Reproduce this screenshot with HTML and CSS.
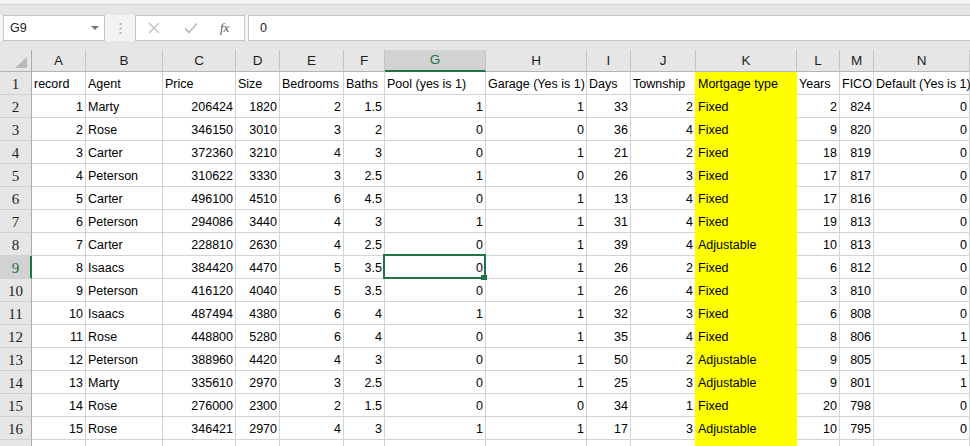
FILE: index.html
```html
<!DOCTYPE html>
<html>
<head>
<meta charset="utf-8">
<link rel="stylesheet" href="styles.css">
</head>
<body>
<div class="top"></div>
<div class="fbar">
  <div class="namebox"><span>G9</span><svg class="dd" width="8" height="4" viewBox="0 0 8 4"><path d="M0 0H8L4 4Z" fill="#777"/></svg></div>
  <div class="dots"><svg width="3" height="11" viewBox="0 0 3 11"><rect x="0.5" y="0" width="2" height="2" fill="#b5b5b5"/><rect x="0.5" y="4.5" width="2" height="2" fill="#b5b5b5"/><rect x="0.5" y="9" width="2" height="2" fill="#b5b5b5"/></svg></div>
  <div class="fxbox">
    <svg class="ico" width="12" height="12" viewBox="0 0 12 12"><path d="M1 1L11 11M11 1L1 11" stroke="#bdbdbd" stroke-width="1.3" fill="none"/></svg>
    <svg class="ico" width="14" height="12" viewBox="0 0 14 12"><path d="M1 6.5L5 10.5L13 1.5" stroke="#bdbdbd" stroke-width="1.8" fill="none"/></svg>
    <span class="fx">fx</span>
  </div>
  <div class="finput">0</div>
</div>
<div class="sheet">
  <div class="ch corner"><svg width="31" height="21" viewBox="0 0 31 21"><path d="M27 7V18H15Z" fill="#b9b9b9"/></svg></div>
  <div class="ch">A</div><div class="ch">B</div><div class="ch">C</div><div class="ch">D</div><div class="ch">E</div><div class="ch">F</div><div class="ch sel">G</div><div class="ch">H</div><div class="ch">I</div><div class="ch">J</div><div class="ch">K</div><div class="ch">L</div><div class="ch">M</div><div class="ch">N</div>

  <div class="rh">1</div><div class="t">record</div><div class="t">Agent</div><div class="t">Price</div><div class="t">Size</div><div class="t">Bedrooms</div><div class="t">Baths</div><div class="t">Pool (yes is 1)</div><div class="t">Garage (Yes is 1)</div><div class="t">Days</div><div class="t">Township</div><div class="t y">Mortgage type</div><div class="t">Years</div><div class="t">FICO</div><div class="t">Default (Yes is 1)</div>

  <div class="rh">2</div><div>1</div><div class="t">Marty</div><div>206424</div><div>1820</div><div>2</div><div>1.5</div><div>1</div><div>1</div><div>33</div><div>2</div><div class="t y">Fixed</div><div>2</div><div>824</div><div>0</div>
  <div class="rh">3</div><div>2</div><div class="t">Rose</div><div>346150</div><div>3010</div><div>3</div><div>2</div><div>0</div><div>0</div><div>36</div><div>4</div><div class="t y">Fixed</div><div>9</div><div>820</div><div>0</div>
  <div class="rh">4</div><div>3</div><div class="t">Carter</div><div>372360</div><div>3210</div><div>4</div><div>3</div><div>0</div><div>1</div><div>21</div><div>2</div><div class="t y">Fixed</div><div>18</div><div>819</div><div>0</div>
  <div class="rh">5</div><div>4</div><div class="t">Peterson</div><div>310622</div><div>3330</div><div>3</div><div>2.5</div><div>1</div><div>0</div><div>26</div><div>3</div><div class="t y">Fixed</div><div>17</div><div>817</div><div>0</div>
  <div class="rh">6</div><div>5</div><div class="t">Carter</div><div>496100</div><div>4510</div><div>6</div><div>4.5</div><div>0</div><div>1</div><div>13</div><div>4</div><div class="t y">Fixed</div><div>17</div><div>816</div><div>0</div>
  <div class="rh">7</div><div>6</div><div class="t">Peterson</div><div>294086</div><div>3440</div><div>4</div><div>3</div><div>1</div><div>1</div><div>31</div><div>4</div><div class="t y">Fixed</div><div>19</div><div>813</div><div>0</div>
  <div class="rh">8</div><div>7</div><div class="t">Carter</div><div>228810</div><div>2630</div><div>4</div><div>2.5</div><div>0</div><div>1</div><div>39</div><div>4</div><div class="t y">Adjustable</div><div>10</div><div>813</div><div>0</div>
  <div class="rh sel">9</div><div>8</div><div class="t">Isaacs</div><div>384420</div><div>4470</div><div>5</div><div>3.5</div><div class="active">0</div><div>1</div><div>26</div><div>2</div><div class="t y">Fixed</div><div>6</div><div>812</div><div>0</div>
  <div class="rh">10</div><div>9</div><div class="t">Peterson</div><div>416120</div><div>4040</div><div>5</div><div>3.5</div><div>0</div><div>1</div><div>26</div><div>4</div><div class="t y">Fixed</div><div>3</div><div>810</div><div>0</div>
  <div class="rh">11</div><div>10</div><div class="t">Isaacs</div><div>487494</div><div>4380</div><div>6</div><div>4</div><div>1</div><div>1</div><div>32</div><div>3</div><div class="t y">Fixed</div><div>6</div><div>808</div><div>0</div>
  <div class="rh">12</div><div>11</div><div class="t">Rose</div><div>448800</div><div>5280</div><div>6</div><div>4</div><div>0</div><div>1</div><div>35</div><div>4</div><div class="t y">Fixed</div><div>8</div><div>806</div><div>1</div>
  <div class="rh">13</div><div>12</div><div class="t">Peterson</div><div>388960</div><div>4420</div><div>4</div><div>3</div><div>0</div><div>1</div><div>50</div><div>2</div><div class="t y">Adjustable</div><div>9</div><div>805</div><div>1</div>
  <div class="rh">14</div><div>13</div><div class="t">Marty</div><div>335610</div><div>2970</div><div>3</div><div>2.5</div><div>0</div><div>1</div><div>25</div><div>3</div><div class="t y">Adjustable</div><div>9</div><div>801</div><div>1</div>
  <div class="rh">15</div><div>14</div><div class="t">Rose</div><div>276000</div><div>2300</div><div>2</div><div>1.5</div><div>0</div><div>0</div><div>34</div><div>1</div><div class="t y">Fixed</div><div>20</div><div>798</div><div>0</div>
  <div class="rh">16</div><div>15</div><div class="t">Rose</div><div>346421</div><div>2970</div><div>4</div><div>3</div><div>1</div><div>1</div><div>17</div><div>3</div><div class="t y">Adjustable</div><div>10</div><div>795</div><div>0</div>
  <div class="rh">17</div><div></div><div></div><div></div><div></div><div></div><div></div><div></div><div></div><div></div><div></div><div class="y"></div><div></div><div></div><div></div>
</div>
</body>
</html>
```
FILE: styles.css
```css
html, body {
  margin: 0;
  padding: 0;
}
body {
  width: 970px;
  height: 446px;
  overflow: hidden;
  background: #e6e6e6;
  font-family: "Liberation Sans", Arial, sans-serif;
  color: #000;
}
.top {
  height: 4px;
  background: #f3f3f3;
  border-bottom: 1px solid #d2d2d2;
}
.fbar {
  display: flex;
  height: 26px;
  margin-top: 10px;
  background: #f3f3f3;
}
.namebox {
  margin-left: 3px;
  width: 102px;
  box-sizing: border-box;
  border: 1px solid #c6c6c6;
  background: #fff;
  display: flex;
  align-items: center;
  justify-content: space-between;
  padding: 0 5px 0 6px;
  font-size: 12.5px;
  color: #222;
}
.dots {
  width: 30px;
  display: flex;
  align-items: center;
  justify-content: center;
}
.fxbox {
  width: 110px;
  box-sizing: border-box;
  border: 1px solid #c6c6c6;
  background: #fff;
  display: flex;
  align-items: center;
  padding-left: 12px;
  gap: 24px;
}
.fx {
  font-family: "Liberation Serif", serif;
  font-style: italic;
  font-size: 13px;
  color: #555;
  margin-left: -2px;
}
.finput {
  flex: 1;
  margin-left: 3px;
  box-sizing: border-box;
  border: 1px solid #c6c6c6;
  border-right: none;
  background: #fff;
  padding-left: 11px;
  font-size: 12.5px;
  line-height: 24px;
  color: #222;
}
.sheet {
  margin-top: 9px;
  display: grid;
  grid-template-columns: 32px 54px 77px 73px 44px 64px 41px 101px 101px 44px 65px 101px 43px 34px 96px;
  grid-template-rows: 22px;
  grid-auto-rows: 23px;
}
.sheet > div {
  box-sizing: border-box;
  background: #fff;
  border-right: 1px solid #d4d4d4;
  border-bottom: 1px solid #d4d4d4;
  font-size: 12.5px;
  line-height: 20px;
  padding: 2px 2px 0;
  white-space: nowrap;
  text-align: right;
}
.sheet > .t {
  text-align: left;
}
.sheet > .y {
  background: #ffff00;
  border-right-color: #ffff00;
  border-bottom-color: #ffff00;
  box-shadow: -1px 0 0 #ffff00;
}
.sheet > .ch {
  background: #e6e6e6;
  border-right-color: #c4c4c4;
  border-bottom-color: #b4b4b4;
  text-align: center;
  font-size: 13.5px;
  line-height: 21px;
  color: #1e1e1e;
  padding: 0;
}
.sheet > .corner {
  border-right-color: #ababab;
}
.corner svg {
  display: block;
}
.sheet > .ch.sel {
  background: #d2d2d2;
  color: #217346;
  border-bottom: 2px solid #217346;
  line-height: 20px;
}
.sheet > .rh {
  background: #e6e6e6;
  border-right-color: #ababab;
  border-bottom-color: #d0d0d0;
  text-align: center;
  font-family: "Liberation Serif", serif;
  font-size: 15px;
  line-height: 22px;
  padding: 1px 0 0;
  color: #1e1e1e;
}
.sheet > .rh.sel {
  background: #d2d2d2;
  color: #217346;
  border-right-color: #217346;
  box-shadow: inset -1px 0 0 #217346;
}
.sheet > .active {
  position: relative;
}
.active::after {
  content: "";
  position: absolute;
  left: -2px;
  top: -2px;
  right: -1px;
  bottom: -1px;
  border: 2px solid #217346;
  z-index: 2;
}
.active::before {
  content: "";
  position: absolute;
  right: -2px;
  bottom: -2px;
  width: 6px;
  height: 5px;
  background: #217346;
  z-index: 3;
}
```
